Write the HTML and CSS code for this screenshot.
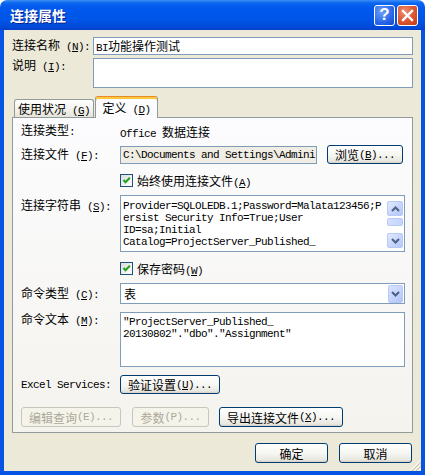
FILE: index.html
```html
<!DOCTYPE html>
<html lang="zh-CN">
<head>
    <meta charset="UTF-8">
    <title>连接属性</title>
    <link rel="stylesheet" href="styles.css">
</head>
<body>
    <div class="window">
        <div class="titlebar">
            <span class="title">连接属性</span>
            <span class="tbtn help">?</span>
            <span class="tbtn close">
                <svg width="13" height="13" viewBox="0 0 13 13"><path d="M2 2 L11 11 M11 2 L2 11" stroke="#fff" stroke-width="2.4" stroke-linecap="square"/></svg>
            </span>
        </div>
        <div class="client">
            <div class="row name-row">
                <label class="lbl">连接名称<span class="a"> (<u>N</u>):</span></label>
                <div class="input"><span class="a">BI</span>功能操作测试</div>
            </div>
            <div class="row desc-row">
                <label class="lbl">说明<span class="a"> (<u>I</u>):</span></label>
                <div class="input"></div>
            </div>

            <div class="tabs">
                <div class="tab">使用状况<span class="a"> (<u>G</u>)</span></div>
                <div class="tab active">定义<span class="a"> (<u>D</u>)</span></div>
            </div>

            <div class="panel">
                <div class="prow type-row">
                    <span class="plbl">连接类型<span class="a">:</span></span>
                    <span><span class="a">Office </span>数据连接</span>
                </div>
                <div class="prow file-row">
                    <span class="plbl">连接文件<span class="a"> (<u>F</u>):</span></span>
                    <div class="file-box a">C:\Documents and Settings\Admini</div>
                    <button class="btn browse">浏览<span class="a">(<u>B</u>)...</span></button>
                </div>
                <div class="prow check-row">
                    <span class="cb"><svg width="11" height="11" viewBox="0 0 11 11"><path d="M2.5 5 L4.5 7.2 L8.8 2.8" fill="none" stroke="#21A121" stroke-width="2"/></svg></span>
                    <span>始终使用连接文件<span class="a">(<u>A</u>)</span></span>
                </div>
                <div class="prow str-row">
                    <span class="plbl">连接字符串<span class="a"> (<u>S</u>):</span></span>
                    <div class="textbox">
                        <div class="lines a">
                            <div>Provider=SQLOLEDB.1;Password=Malata123456;P</div>
                            <div>ersist Security Info=True;User</div>
                            <div>ID=sa;Initial</div>
                            <div>Catalog=ProjectServer_Published_</div>
                        </div>
                        <div class="scroll">
                            <span class="sbtn"><svg width="9" height="6" viewBox="0 0 9 6"><path d="M1 5 L4.5 1.5 L8 5" fill="none" stroke="#4D6185" stroke-width="2"/></svg></span>
                            <span class="thumb"></span>
                            <span class="track"></span>
                            <span class="sbtn"><svg width="9" height="6" viewBox="0 0 9 6"><path d="M1 1 L4.5 4.5 L8 1" fill="none" stroke="#4D6185" stroke-width="2"/></svg></span>
                        </div>
                    </div>
                </div>
                <div class="prow check-row pw-row">
                    <span class="cb"><svg width="11" height="11" viewBox="0 0 11 11"><path d="M2.5 5 L4.5 7.2 L8.8 2.8" fill="none" stroke="#21A121" stroke-width="2"/></svg></span>
                    <span>保存密码<span class="a">(<u>W</u>)</span></span>
                </div>
                <div class="prow sel-row">
                    <span class="plbl">命令类型<span class="a"> (<u>C</u>):</span></span>
                    <div class="select">
                        <span class="sel-val">表</span>
                        <span class="drop"><svg width="9" height="6" viewBox="0 0 9 6"><path d="M1 1 L4.5 4.5 L8 1" fill="none" stroke="#4D6185" stroke-width="2"/></svg></span>
                    </div>
                </div>
                <div class="prow cmd-row">
                    <span class="plbl">命令文本<span class="a"> (<u>M</u>):</span></span>
                    <div class="textbox cmd-box">
                        <div class="lines a">
                            <div>"ProjectServer_Published_</div>
                            <div>20130802"."dbo"."Assignment"</div>
                        </div>
                    </div>
                </div>
                <div class="prow excel-row">
                    <span class="plbl a">Excel Services:</span>
                    <button class="btn auth">验证设置<span class="a"> (<u>U</u>)...</span></button>
                </div>
                <div class="prow btn-row">
                    <button class="btn disabled edit" disabled>编辑查询<span class="a">(E)...</span></button>
                    <button class="btn disabled params" disabled>参数<span class="a">(P)...</span></button>
                    <button class="btn export">导出连接文件<span class="a"> (<u>X</u>)...</span></button>
                </div>
            </div>

            <div class="dialog-buttons">
                <button class="btn ok">确定</button>
                <button class="btn ok">取消</button>
            </div>
            <svg class="grip" width="12" height="12" viewBox="0 0 12 12">
                <path d="M11 2 L2 11 M11 6 L6 11 M11 10 L10 11" stroke="#fff" stroke-width="1"/>
                <path d="M12 3 L3 12 M12 7 L7 12" stroke="#C5C2B2" stroke-width="1"/>
            </svg>
        </div>
    </div>
</body>
</html>
```

FILE: styles.css
```css
html, body {
    margin: 0;
    padding: 0;
    background: #fff;
}

body {
    font: 12px "Noto Sans CJK SC", sans-serif;
    color: #000;
}

/* ascii bits drawn narrow like the old bitmap font */
.a {
    font-family: "Liberation Mono", monospace;
    font-size: 11px;
    letter-spacing: -0.6px;
}

.window {
    width: 425px;
    height: 475px;
    display: flex;
    flex-direction: column;
}

.titlebar {
    height: 30px;
    box-sizing: border-box;
    padding: 0 7px 0 10px;
    display: flex;
    align-items: center;
    border-radius: 7px 7px 0 0;
    background: linear-gradient(
        #3D8FF6 0px,
        #0C66EE 3px,
        #0058EE 8px,
        #0055E6 20px,
        #0049D9 27px,
        #0041CC 30px
    );
}

.title {
    flex: 1;
    color: #fff;
    font-weight: bold;
    font-size: 14px;
    text-shadow: 1px 1px 0 #0A1F8F;
}

.tbtn {
    width: 21px;
    height: 21px;
    box-sizing: border-box;
    border: 1px solid #fff;
    border-radius: 3px;
    display: flex;
    align-items: center;
    justify-content: center;
}

.help {
    margin-right: 2px;
    color: #fff;
    font: bold 17px "Liberation Sans", sans-serif;
    background: radial-gradient(circle at 35% 30%, #6FA0FA, #2A66EA 60%, #1548C9);
}

.close {
    background: radial-gradient(circle at 35% 30%, #EE8F70, #DC5430 55%, #C13A12);
}

.client {
    flex: 1;
    position: relative;
    display: flex;
    flex-direction: column;
    padding: 7px 8px 0 8px;
    background: #ECE9D8;
    border: 4px solid #0554E4;
    border-top: 0;
}

.row {
    display: flex;
}

.lbl {
    width: 81px;
    flex: none;
    line-height: 14px;
}

.input {
    flex: 1;
    box-sizing: border-box;
    border: 1px solid #7F9DB9;
    background: #fff;
}

.name-row {
    height: 18px;
    align-items: center;
}

.name-row .input {
    height: 18px;
    padding-left: 2px;
    line-height: 16px;
}

.desc-row {
    margin-top: 3px;
}

.desc-row .input {
    height: 30px;
}

.tabs {
    display: flex;
    align-items: flex-end;
    height: 21px;
    margin-top: 8px;
    padding-left: 2px;
}

.tab {
    width: 80px;
    height: 18px;
    box-sizing: border-box;
    border: 1px solid #919B9C;
    border-bottom: 0;
    border-radius: 3px 3px 0 0;
    background: linear-gradient(#FFFFFF, #F1F0EA 60%, #E6E4DA);
    text-align: center;
    line-height: 17px;
}

.tab.active {
    position: relative;
    z-index: 1;
    width: 63px;
    height: 22px;
    margin-left: 1px;
    margin-bottom: -1px;
    padding-top: 2px;
    border-top-color: #E68B2C;
    box-shadow: inset 0 2px 0 #FFC73C;
    background: #FCFCFE;
}

.panel {
    height: 316px;
    box-sizing: border-box;
    padding: 6px 7px 0 8px;
    border: 1px solid #919B9C;
    background: linear-gradient(#FCFCFE, #F4F3EE);
    display: flex;
    flex-direction: column;
}

.prow {
    display: flex;
    align-items: center;
}

.plbl {
    width: 99px;
    flex: none;
    line-height: 14px;
}

.type-row {
    height: 14px;
}

.file-row {
    height: 19px;
    margin-top: 7px;
}

.file-box {
    width: 197px;
    height: 18px;
    box-sizing: border-box;
    margin-right: 10px;
    padding-left: 2px;
    border: 1px solid #7F9DB9;
    background: #EFEDE4;
    line-height: 16px;
    white-space: nowrap;
    overflow: hidden;
}

.btn {
    box-sizing: border-box;
    margin: 0;
    padding: 0;
    border: 1px solid #003C74;
    border-radius: 3px;
    background: linear-gradient(#FFFFFF 0%, #F5F5F1 55%, #E8E7E0 88%, #D6D0C5 100%);
    font: 12px "Noto Sans CJK SC", sans-serif;
    color: #000;
    display: flex;
    align-items: center;
    justify-content: center;
}

.btn.disabled {
    border-color: #C9C7BA;
    background: #F5F4EA;
    color: #ACA899;
}

.browse {
    width: 76px;
    height: 19px;
}

.check-row {
    height: 13px;
    margin-top: 10px;
    padding-left: 99px;
}

.cb {
    width: 13px;
    height: 13px;
    box-sizing: border-box;
    margin-right: 4px;
    border: 1px solid #1C5180;
    background: linear-gradient(135deg, #DCDCD7, #FFFFFF);
    display: flex;
    align-items: center;
    justify-content: center;
}

.str-row {
    margin-top: 8px;
    align-items: flex-start;
}

.str-row .plbl {
    padding-top: 3px;
}

.textbox {
    flex: 1;
    height: 57px;
    box-sizing: border-box;
    border: 1px solid #7F9DB9;
    background: #fff;
    display: flex;
}

.lines {
    flex: 1;
    padding: 4px 0 0 2px;
    line-height: 12px;
}

.lines div {
    white-space: pre;
}

.scroll {
    width: 16px;
    margin: 5px 1px 3px 0;
    display: flex;
    flex-direction: column;
}

.sbtn {
    height: 15px;
    box-sizing: border-box;
    border: 1px solid #B7CAF5;
    border-radius: 2px;
    background: linear-gradient(135deg, #E1EAFE, #C3D3FD 60%, #B4C8F6);
    display: flex;
    align-items: center;
    justify-content: center;
}

.thumb {
    height: 8px;
    margin-top: 2px;
    box-sizing: border-box;
    border: 1px solid #B7CAF5;
    border-radius: 2px;
    background: linear-gradient(90deg, #D3E0FD, #C3D3FD);
}

.track {
    flex: 1;
}

.pw-row {
    margin-top: 10px;
}

.sel-row {
    margin-top: 8px;
}

.select {
    flex: 1;
    height: 21px;
    box-sizing: border-box;
    border: 1px solid #7F9DB9;
    background: #fff;
    display: flex;
    align-items: center;
}

.sel-val {
    flex: 1;
    padding-left: 3px;
}

.drop {
    width: 15px;
    height: 18px;
    margin-right: 1px;
    box-sizing: border-box;
    border: 1px solid #B7CAF5;
    border-radius: 2px;
    background: linear-gradient(135deg, #D8E3FE, #C1D2FC 60%, #B0C4F5);
    display: flex;
    align-items: center;
    justify-content: center;
}

.cmd-row {
    margin-top: 8px;
    align-items: flex-start;
}

.cmd-box {
    height: 55px;
}

.cmd-box .lines {
    padding-top: 3px;
}

.excel-row {
    margin-top: 8px;
}

.auth {
    width: 100px;
    height: 19px;
}

.btn-row {
    margin-top: 13px;
    gap: 11px;
}

.edit {
    width: 100px;
    height: 20px;
}

.params {
    width: 77px;
    height: 20px;
    margin-right: -1px;
}

.export {
    width: 124px;
    height: 20px;
}

.dialog-buttons {
    display: flex;
    justify-content: flex-end;
    gap: 11px;
    margin-top: 10px;
    margin-right: 1px;
}

.ok {
    width: 73px;
    height: 20px;
}

.grip {
    position: absolute;
    right: 0;
    bottom: 0;
}
```
